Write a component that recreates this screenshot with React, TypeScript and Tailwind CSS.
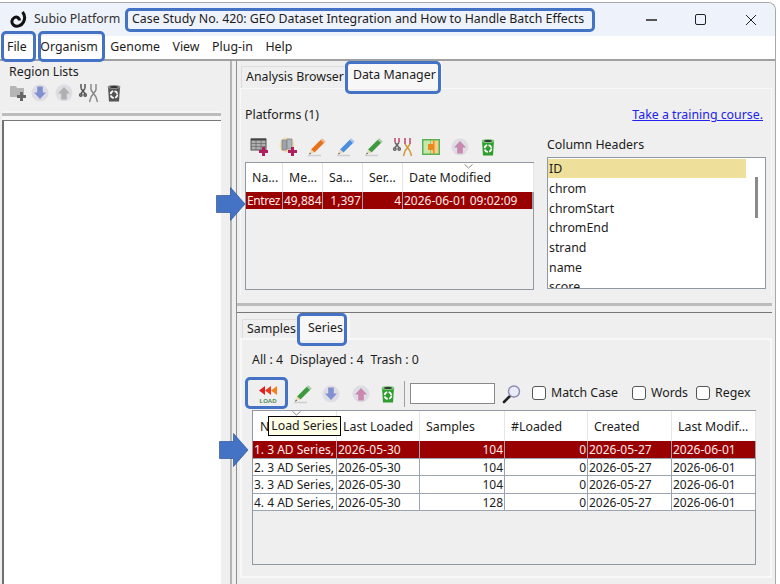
import type { ReactNode } from 'react';

const font = "font-['Noto_Sans','Liberation_Sans',sans-serif]";

function Circle({ dir, fill }: { dir: 'up' | 'down'; fill: string }) {
    return (
        <svg width="20" height="20" viewBox="0 0 20 20">
            <circle cx="10" cy="10" r="8.5" fill="#dddde3" />
            <path
                d={dir === 'down' ? 'M7.2 3.5h5.6v6H16L10 16 4 9.5h3.2z' : 'M7.2 16.5h5.6v-6H16L10 4 4 10.5h3.2z'}
                fill={fill}
            />
        </svg>
    );
}

function Scissors({ a = '#555', b = '#8a8a8a', top }: { a?: string; b?: string; top?: string }) {
    return (
        <svg width="22" height="20" viewBox="0 0 22 20" fill="none" strokeWidth="1.5">
            <path d="M3 5.5l4 5M7 5.5l-4 5" stroke={a} />
            <path d="M3 1v4.5M7 1v4.5" stroke={top ?? a} />
            <circle cx="2.8" cy="12" r="1.2" stroke={a} />
            <circle cx="7.2" cy="12" r="1.2" stroke={a} />
            <path d="M13 7l5 7M18 7l-5 7" stroke={b} />
            <path d="M13 1v6M18 1v6" stroke={top ?? b} />
            <path d="M13 14l-1.5 5M18 14l1.5 5" stroke={b} />
        </svg>
    );
}

function Trash({ body, dim }: { body: string; dim?: boolean }) {
    return (
        <svg width="18" height="20" viewBox="0 0 18 20">
            <path d="M3 4h12l-1 14.5H4z" fill={body} />
            <ellipse cx="9" cy="4" rx="6.5" ry="2" fill={dim ? '#8a8a8a' : '#7fc97f'} />
            <ellipse cx="9" cy="4" rx="4" ry="1" fill="#333" />
            <circle cx="9" cy="11.5" r="3.4" fill="none" stroke="#fff" strokeWidth="1.7" strokeDasharray="4 1.4" />
        </svg>
    );
}

function Pencil({ color, tip = '#444' }: { color: string; tip?: string }) {
    return (
        <svg width="22" height="20" viewBox="0 0 22 20">
            <path d="M2 18.5h13" stroke="#cfcfcf" strokeWidth="1.5" />
            <path d="M16 1.5l3.5 3L8.5 15.5 5 12.5z" fill={color} />
            <path d="M16 1.5l3.5 3-1.5 1.5-3.5-3z" fill="#eee" opacity="0.6" />
            <path d="M5 12.5l3.5 3L3 17.5z" fill="#eed9b5" />
            <path d="M4 15.6L3 17.5l2-.8z" fill={tip} />
        </svg>
    );
}

function AddFolder() {
    return (
        <svg width="20" height="18" viewBox="0 0 20 18">
            <path d="M1 2h6l1 2h7v9H1z" fill="#b5b5b5" />
            <path d="M11 8h3v3h3v3h-3v3h-3v-3H8v-3h3z" fill="#666" />
        </svg>
    );
}

function GridPlus() {
    return (
        <svg width="20" height="20" viewBox="0 0 20 20">
            <rect x="1" y="2" width="15" height="11" fill="#b0b0b0" stroke="#555" />
            <path d="M1 2.5h15" stroke="#444" strokeWidth="2" />
            <path d="M1 6.5h15M1 9.5h15M6 3v10M11 3v10" stroke="#666" strokeWidth="0.7" />
            <path d="M12 10h3v3h3v3h-3v3h-3v-3H9v-3h3z" fill="#b02060" />
        </svg>
    );
}

function PagesPlus() {
    return (
        <svg width="20" height="20" viewBox="0 0 20 20">
            <circle cx="8" cy="8" r="7.5" fill="#f2dcb4" />
            <rect x="3" y="3" width="4.5" height="10" fill="#9aa4ac" stroke="#777" strokeWidth="0.6" />
            <rect x="8" y="2" width="5" height="10" fill="#aab6be" stroke="#777" strokeWidth="0.6" />
            <path d="M12 10h3v3h3v3h-3v3h-3v-3H9v-3h3z" fill="#b02060" />
        </svg>
    );
}

function Merge() {
    return (
        <svg width="20" height="20" viewBox="0 0 20 20">
            <rect x="1" y="2" width="18" height="16" fill="#55b555" />
            <rect x="2.5" y="3.5" width="7" height="13" fill="#c8e8a8" />
            <rect x="10" y="3.5" width="7.5" height="13" fill="#f6cf8a" />
            <path d="M7 7h5V3.5h1.5v13H12V13H7z" fill="#ea8a1e" />
        </svg>
    );
}

function LoadIcon() {
    return (
        <svg width="26" height="22" viewBox="0 0 26 22">
            <path d="M10 3v9L4 7.5z" fill="#e02020" />
            <path d="M16 3v9l-6-4.5z" fill="#e83a20" />
            <path d="M22 3v9l-6-4.5z" fill="#f08020" />
            <text x="13" y="19.5" textAnchor="middle" fontSize="6" fontWeight="700" fill="#4d8a55" fontFamily="Liberation Sans">
                LOAD
            </text>
        </svg>
    );
}

function Magnifier() {
    return (
        <svg width="20" height="20" viewBox="0 0 20 20">
            <path d="M8 12l-6 6" stroke="#222" strokeWidth="2.6" strokeLinecap="round" />
            <circle cx="12" cy="7.5" r="5.5" fill="#e8ecfa" stroke="#8a8ab0" strokeWidth="1.4" />
        </svg>
    );
}

function Box({ x, y, w, h }: { x: number; y: number; w: number; h: number }) {
    return (
        <div
            className="absolute rounded-[5px] border-[3px] border-[#4472c4]"
            style={{ left: x, top: y, width: w, height: h }}
        />
    );
}

function Arrow({ x, y }: { x: number; y: number }) {
    return (
        <svg className="absolute" style={{ left: x, top: y }} width="30" height="34" viewBox="0 0 30 34">
            <path d="M0.5 8.5h14V0.5L29 17 14.5 33.5v-8h-14z" fill="#4472c4" stroke="#2f5597" strokeWidth="0.7" />
        </svg>
    );
}

function Check({ label, className }: { label: string; className: string }) {
    return (
        <div className={`flex items-center gap-[5px] ${className}`}>
            <span className="h-[14px] w-[14px] rounded-[3px] border border-[#555] bg-white" />
            <span>{label}</span>
        </div>
    );
}

function Cell({ w, right, children, sel }: { w: number; right?: boolean; children: ReactNode; sel?: boolean }) {
    return (
        <div
            className={`h-full shrink-0 overflow-hidden whitespace-nowrap border-r border-[#9aa5b1] px-[1px] text-[12px] leading-[18px] ${right ? 'text-right' : ''} ${sel ? 'text-[#ffe9e9]' : ''}`}
            style={{ width: w }}
        >
            {children}
        </div>
    );
}

function Head({ w, children, pad = 6 }: { w: number; children: ReactNode; pad?: number }) {
    return (
        <div
            className="flex h-full shrink-0 items-center whitespace-nowrap border-r border-[#e6e6e6] pt-[2px]"
            style={{ width: w, paddingLeft: pad }}
        >
            {children}
        </div>
    );
}

function Slot({ children }: { children: ReactNode }) {
    return <div className="flex w-[28.5px] shrink-0 justify-center">{children}</div>;
}

function Chevron({ x, y }: { x: number; y: number }) {
    return (
        <svg className="absolute" style={{ left: x, top: y }} width="9" height="5" viewBox="0 0 9 5">
            <path d="M0.5 0.5l4 3.5 4-3.5" fill="none" stroke="#8a8a8a" />
        </svg>
    );
}

const platformCols = [37, 40, 40, 40, 131];
const seriesCols = [84, 83, 85, 83, 84, 84];
const seriesRows = [
    ['1. 3 AD Series,', '2026-05-30', '104', '0', '2026-05-27', '2026-06-01'],
    ['2. 3 AD Series,', '2026-05-30', '104', '0', '2026-05-27', '2026-06-01'],
    ['3. 3 AD Series,', '2026-05-30', '104', '0', '2026-05-27', '2026-06-01'],
    ['4. 4 AD Series,', '2026-05-30', '128', '0', '2026-05-27', '2026-06-01'],
];
const headers = ['chrom', 'chromStart', 'chromEnd', 'strand', 'name', 'score'];

export default function App() {
    return (
        <div className={`relative h-[584px] w-[780px] overflow-hidden bg-white pt-[2px] text-[12.35px] text-[#1c1c1c] ${font}`}>
            <div className="flex h-[582px] w-[776px] flex-col overflow-hidden rounded-tr-[8px] border-r border-t border-[#a8a8a8] bg-[#efefef]">
                {/* title bar */}
                <div className="flex h-[33px] shrink-0 items-center bg-[#eef2fb] pl-[10px]">
                    <svg width="18" height="18" viewBox="0 0 18 18">
                        <path d="M12.5 1c2.5 3 2.5 7 1 10-2 4-7 5.500-10 3-2.500-2-2-6 1-7.500 2.500-1.200 5 .5 5 3" fill="none" stroke="#111" strokeWidth="3" />
                    </svg>
                    <span className="ml-[6px] w-[98px] whitespace-nowrap text-[#333]">Subio Platform</span>
                    <span className="whitespace-nowrap">Case Study No. 420: GEO Dataset Integration and How to Handle Batch Effects</span>
                    <div className="ml-auto flex items-center pr-[18px] text-[#222]">
                        <span className="h-[2px] w-[11px] bg-[#555]" />
                        <span className="ml-[38px] h-[11px] w-[11px] rounded-[2px] border border-[#222]" />
                        <svg className="ml-[39px]" width="12" height="12" viewBox="0 0 12 12">
                            <path d="M1 1l10 10M11 1L1 11" stroke="#222" strokeWidth="1" />
                        </svg>
                    </div>
                </div>

                {/* menu */}
                <div className="flex h-[25px] shrink-0 items-center gap-[12.6px] border-b-2 border-[#a0a0a0] bg-white pl-[7px]">
                    <span>File</span>
                    <span className="ml-[1px]">Organism</span>
                    <span>Genome</span>
                    <span>View</span>
                    <span>Plug-in</span>
                    <span>Help</span>
                </div>

                <div className="flex min-h-0 flex-1">
                    {/* left */}
                    <div className="flex w-[221px] shrink-0 flex-col pl-[2px]">
                        <div className="h-[50px] shrink-0 pl-[7px] pt-[2px]">
                            <div>Region Lists</div>
                            <div className="mt-[1px] flex items-center">
                                <AddFolder />
                                <div className="ml-[1px]"><Circle dir="down" fill="#8090d0" /></div>
                                <div className="ml-[4px]"><Circle dir="up" fill="#b0b0b0" /></div>
                                <div className="ml-[4px]"><Scissors /></div>
                                <div className="ml-[5px]"><Trash body="#555" dim /></div>
                            </div>
                        </div>
                        <div className="h-[10px] shrink-0 border-b border-[#777] bg-[#f6f6f6] pt-[2px]">
                            <div className="h-[3px] bg-[#bcbcbc]" />
                        </div>
                        <div className="flex-1 border-l-2 border-[#707070] bg-white" />
                    </div>

                    {/* sash */}
                    <div className="ml-[9px] w-[2px] shrink-0 bg-[#b4b4b4]" />
                    <div className="ml-[4px] w-[1px] shrink-0 bg-[#8f8f8f]" />

                    {/* right */}
                    <div className="flex min-w-0 flex-1 flex-col pr-[3px]">
                        {/* upper pane */}
                        <div className="flex h-[234px] shrink-0 flex-col pl-[3px]">
                            <div className="flex h-[27px] shrink-0 items-end pl-[1px]">
                                <div className="flex h-[22px] items-center border border-b-0 border-[#dcdcdc] pl-[4px] pr-[2px]">Analysis Browser</div>
                                <div className="flex h-[27px] items-start bg-[#f7f7f7] pl-[6px] pr-[6px] pt-[5px]">Data Manager</div>
                            </div>
                            <div className="flex-1 border-x border-t border-[#f8f8f8] px-[4px]">
                                <div className="flex h-[43px] items-end justify-between pb-[7px]">
                                    <span>Platforms (1)</span>
                                    <span className="mr-[4px] text-[#2222ee] underline">Take a training course.</span>
                                </div>
                                <div className="flex h-[30px] items-center pl-[1px]">
                                    <Slot><GridPlus /></Slot>
                                    <Slot><PagesPlus /></Slot>
                                    <Slot><Pencil color="#e8721c" /></Slot>
                                    <Slot><Pencil color="#4a8ee0" /></Slot>
                                    <Slot><Pencil color="#3f9a3f" /></Slot>
                                    <Slot><Scissors a="#666" b="#d09a3a" top="#c04070" /></Slot>
                                    <Slot><Merge /></Slot>
                                    <Slot><Circle dir="up" fill="#c888b0" /></Slot>
                                    <Slot><Trash body="#2f9e2f" /></Slot>
                                </div>
                                <div className="flex">
                                    <div className="h-[128px] w-[289px] shrink-0 border border-[#8f99a3] bg-[#efefef]">
                                        <div className="flex h-[29px] bg-white">
                                            {['Na...', 'Me...', 'Sa...', 'Ser...'].map((h, i) => (
                                                <Head key={h} w={platformCols[i]}>
                                                    {h}
                                                </Head>
                                            ))}
                                            <Head w={131}>Date Modified</Head>
                                        </div>
                                        <div className="flex h-[17px] bg-[#990000]">
                                            <Cell w={37} sel><span className="tracking-[-0.4px]">Entrez</span></Cell>
                                            <Cell w={40} sel right>49,884</Cell>
                                            <Cell w={40} sel right>1,397</Cell>
                                            <Cell w={40} sel right>4</Cell>
                                            <Cell w={130} sel>2026-06-01 09:02:09</Cell>
                                        </div>
                                    </div>
                                    <div className="ml-[13px] mt-[-25px] w-[219px] shrink-0">
                                        <div className="h-[20px] leading-[16px]">Column Headers</div>
                                        <div className="relative h-[132px] overflow-hidden border border-[#8f99a3] bg-white pt-[1px]">
                                            <div className="mb-[1px] h-[19px] w-[198px] bg-[#eee09b] pl-[1px] leading-[19px]">ID</div>
                                            {headers.map((h) => (
                                                <div key={h} className="h-[19.7px] pl-[1px] leading-[20px]">
                                                    {h}
                                                </div>
                                            ))}
                                            <div className="absolute left-[207px] top-[19px] h-[41px] w-[3px] bg-[#8a8a8a]" />
                                        </div>
                                    </div>
                                </div>
                            </div>
                        </div>

                        {/* sash */}
                        <div className="mt-[8px] h-[3px] shrink-0 bg-[#bcbcbc]" />
                        <div className="mt-[6px] h-px shrink-0 bg-[#777]" />

                        {/* lower pane */}
                        <div className="flex min-h-0 flex-1 flex-col pb-[6px] pl-[3px]">
                            <div className="flex h-[25px] shrink-0 items-end pl-[2px]">
                                <div className="flex h-[19px] items-center border border-b-0 border-[#dcdcdc] pl-[4px] pr-[1px]">Samples</div>
                                <div className="flex h-[25px] items-start bg-[#f7f7f7] pl-[10px] pr-[7px] pt-[6px]">Series</div>
                            </div>
                            <div className="flex-1 border-2 border-[#f8f8f8] pl-[10px]">
                                <div className="flex h-[34px] items-center gap-[7px] pt-[7px]">
                                    <span>All : 4</span>
                                    <span>Displayed : 4</span>
                                    <span>Trash : 0</span>
                                </div>
                                <div className="flex h-[37px] items-center pt-[2px]">
                                    <div className="ml-[3px]"><LoadIcon /></div>
                                    <div className="ml-[11px]"><Pencil color="#3f9a3f" /></div>
                                    <div className="ml-[7px]"><Circle dir="down" fill="#8090d0" /></div>
                                    <div className="ml-[10px]"><Circle dir="up" fill="#c888b0" /></div>
                                    <div className="ml-[8px]"><Trash body="#2f9e2f" /></div>
                                    <div className="ml-[7px] h-[26px] w-px bg-[#a0a0a0]" />
                                    <div className="ml-[5px] h-[21px] w-[85px] border border-[#8a8a8a] bg-white" />
                                    <div className="ml-[7px]"><Magnifier /></div>
                                    <Check label="Match Case" className="ml-[10px]" />
                                    <Check label="Words" className="ml-[14px]" />
                                    <Check label="Regex" className="ml-[8px]" />
                                </div>
                                <div className="mt-[-1px] h-[155px] w-[504px] border border-[#8f99a3] bg-[#efefef]">
                                    <div className="flex h-[30px] bg-white">
                                        <Head w={84} pad={7}>N</Head>
                                        <Head w={83}>Last Loaded</Head>
                                        <Head w={85}>Samples</Head>
                                        <Head w={83}>#Loaded</Head>
                                        <Head w={84}>Created</Head>
                                        <Head w={84}>Last Modif...</Head>
                                    </div>
                                    {seriesRows.map((row, r) => (
                                        <div
                                            key={row[0]}
                                            className={`flex h-[17.6px] border-b border-[#9aa5b1] ${r === 0 ? 'bg-[#990000]' : 'bg-white'}`}
                                        >
                                            {row.map((c, i) => (
                                                <Cell key={i} w={seriesCols[i]} right={i === 2 || i === 3} sel={r === 0}>
                                                    {c}
                                                </Cell>
                                            ))}
                                        </div>
                                    ))}
                                </div>
                            </div>
                        </div>
                    </div>
                </div>
            </div>

            {/* tooltip */}
            <div className="absolute left-[268px] top-[416px] flex h-[20px] w-[73px] items-center justify-center whitespace-nowrap border border-black bg-[#ffffe8]">
                Load Series
            </div>

            <Chevron x={464} y={164} />
            <Chevron x={292} y={411} />

            {/* annotations */}
            <Box x={125} y={8} w={470} h={24} />
            <Box x={1} y={31} w={35} h={31} />
            <Box x={38} y={31} w={67} h={31} />
            <Box x={345} y={61} w={96} h={33} />
            <Box x={297} y={313} w={50} h={33} />
            <Box x={245} y={377} w={43} h={32} />
            <Arrow x={216} y={187} />
            <Arrow x={219} y={433} />
        </div>
    );
}
